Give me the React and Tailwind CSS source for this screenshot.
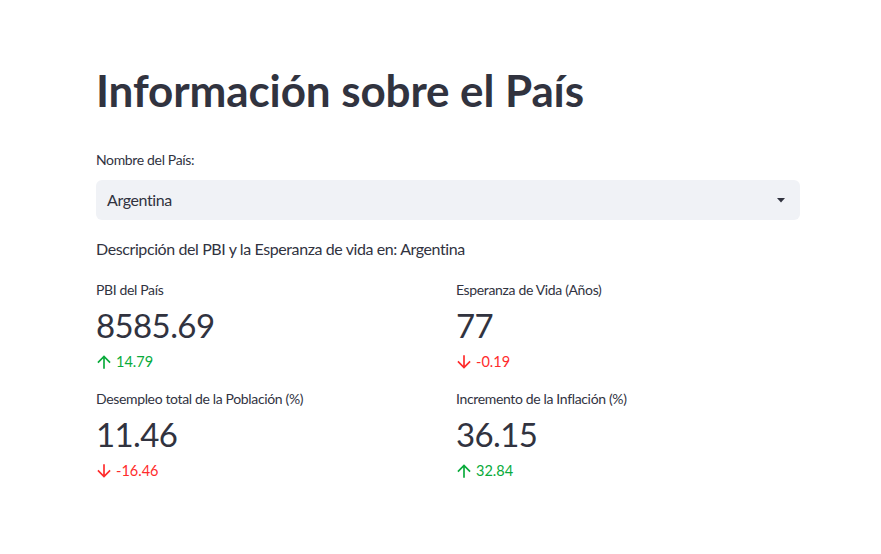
import React from "react";

const font = { fontFamily: "Lato, 'Noto Sans', sans-serif" };

function Up() {
  return (
    <svg width="20" height="20" viewBox="0 0 24 24" fill="currentColor" className="-ml-[2px]">
      <path d="M4 12l1.41 1.41L11 7.83V20h2V7.83l5.58 5.59L20 12l-8-8-8 8z" />
    </svg>
  );
}
function Down() {
  return (
    <svg width="20" height="20" viewBox="0 0 24 24" fill="currentColor" className="-ml-[2px]">
      <path d="M20 12l-1.41-1.41L13 16.17V4h-2v12.17l-5.58-5.59L4 12l8 8 8-8z" />
    </svg>
  );
}

function Metric({ label, value, delta, up }) {
  return (
    <div className="flex flex-col">
      <div className="h-5 text-[14px] leading-5 tracking-[-0.025em]">{label}</div>
      <div className="mt-1 h-[43px] text-[33px] leading-[43px] tracking-[-0.6px]">{value}</div>
      <div
        className={`mt-[5px] flex h-5 items-center gap-[2px] text-[14.5px] leading-5 ${
          up ? "text-[#09ab3b]" : "text-[#ff2b2b]"
        }`}
      >
        {up ? <Up /> : <Down />}
        <span>{delta}</span>
      </div>
    </div>
  );
}

export default function App() {
  return (
    <div className="min-h-[554px] w-full bg-white text-[#31333f]" style={font}>
      <div className="ml-[96px] w-[704px] pt-[64px]">
        <h1 className="h-[53px] text-[44px] font-bold leading-[53px] tracking-[-0.1px]">Información sobre el País</h1>
        <div className="mt-[33px] h-5 text-[14px] leading-5 tracking-[-0.025em]">Nombre del País:</div>
        <div className="mt-[10px] flex h-10 items-center justify-between rounded-[6px] bg-[#f0f2f6] pl-[11px] pr-[15px]">
          <span className="text-[16px] tracking-[-0.025em]">Argentina</span>
          <svg width="8" height="5" viewBox="0 0 8 5">
            <path d="M0 0h8L4 4.5z" fill="#31333f" />
          </svg>
        </div>
        <div className="mt-[17px] h-6 text-[16px] leading-6 tracking-[-0.025em]">
          Descripción del PBI y la Esperanza de vida en: Argentina
        </div>
        <div className="mt-[19px] grid grid-cols-2 gap-x-4 gap-y-[17px]">
          <Metric label="PBI del País" value="8585.69" delta="14.79" up />
          <Metric label="Esperanza de Vida (Años)" value="77" delta="-0.19" />
          <Metric label="Desempleo total de la Población (%)" value="11.46" delta="-16.46" />
          <Metric label="Incremento de la Inflación (%)" value="36.15" delta="32.84" up />
        </div>
      </div>
    </div>
  );
}
